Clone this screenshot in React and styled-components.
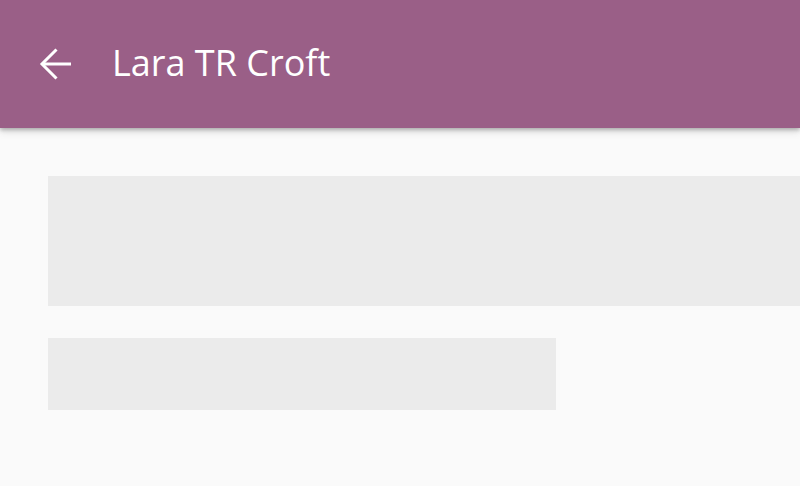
import React from 'react';
import styled, { createGlobalStyle } from 'styled-components';

const GlobalStyle = createGlobalStyle`
  html, body {
    margin: 0;
    padding: 0;
    background: #fafafa;
    font-family: "Open Sans", "Noto Sans", sans-serif;
    overflow: hidden;
  }
`;

const Page = styled.div`
  width: 800px;
  height: 486px;
  background: #fafafa;
  overflow: hidden;
`;

const AppBar = styled.header`
  position: relative;
  z-index: 1;
  display: flex;
  align-items: center;
  height: 128px;
  padding-left: 32px;
  background: #9a5f87;
  box-shadow: 0 2px 4px rgba(0, 0, 0, 0.25), 0 4px 8px rgba(0, 0, 0, 0.1);
  box-sizing: border-box;
`;

const BackButton = styled.button`
  display: flex;
  align-items: center;
  justify-content: center;
  width: 48px;
  height: 48px;
  padding: 0;
  margin: 0 32px 0 0;
  border: none;
  background: none;
  color: #fff;
  cursor: pointer;
`;

const Title = styled.h1`
  margin: 0;
  font-size: 36px;
  font-weight: 400;
  color: #fff;
  line-height: 1;
  margin-top: -2px;
`;

const Content = styled.main`
  display: flex;
  flex-direction: column;
  gap: 32px;
  padding: 48px 0 0 48px;
`;

const Placeholder = styled.div`
  background: #ebebeb;
  width: ${({ $width }) => $width};
  height: ${({ $height }) => $height}px;
  flex-shrink: 0;
`;

const App = () => (
  <Page>
    <GlobalStyle />
    <AppBar>
      <BackButton aria-label="Back">
        <svg
          width="48"
          height="48"
          viewBox="0 0 48 48"
          fill="none"
          stroke="currentColor"
          strokeWidth="3"
        >
          <path d="M10 24H39" />
          <path d="M24.5 9.5L10 24l14.5 14.5" />
        </svg>
      </BackButton>
      <Title>Lara TR Croft</Title>
    </AppBar>
    <Content>
      <Placeholder $width="900px" $height={130} />
      <Placeholder $width="508px" $height={72} />
    </Content>
  </Page>
);

export default App;
